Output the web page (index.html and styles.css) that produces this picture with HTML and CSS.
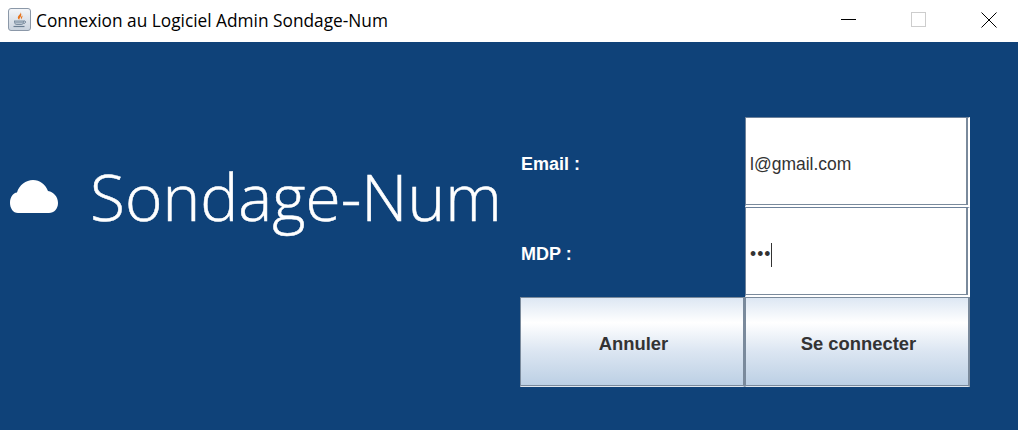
FILE: index.html
```html
<!DOCTYPE html>
<html lang="fr">
<head>
<meta charset="utf-8">
<title>Connexion au Logiciel Admin Sondage-Num</title>
<link rel="stylesheet" href="styles.css">
</head>
<body>
<div class="window">
  <header class="titlebar">
    <svg class="app-icon" width="23" height="23" viewBox="0 0 23 23">
      <defs><linearGradient id="ic" x1="0" y1="0" x2="0" y2="1"><stop offset="0" stop-color="#f4f6f9"/><stop offset="1" stop-color="#c9d2dd"/></linearGradient></defs>
      <rect x="0.5" y="0.5" width="22" height="22" rx="2.5" fill="url(#ic)" stroke="#8b98a8"/>
      <path d="M12.500 4c1 2.500-3.500 3.500-2.500 6.500.3.800 1 1 1.500 1-.5-2 3.500-3 1-7.500zM14.500 7.500c-1.500 1-2 2.200-1.300 4 .2-1 1.500-2 1.300-4z" fill="#e8741c"/>
      <path d="M6 12.500h10v1.200c0 2-1.500 3.300-3 3.300h-4c-1.500 0-3-1.300-3-3.300z" fill="#7d8fa1"/>
      <path d="M7 14h8M7.500 15.500h7" stroke="#dfe5ec" stroke-width="0.600" fill="none"/>
      <path d="M16 13c2.200-.5 2.200 2.500-.5 2.500" stroke="#6a7d90" fill="none"/>
      <path d="M5.500 18.500h11" stroke="#6a7d90" stroke-width="1.200" fill="none"/>
    </svg>
    <h1 class="title">Connexion au Logiciel Admin Sondage-Num</h1>
    <div class="controls">
      <svg class="ctl ctl-min" width="16" height="16" viewBox="0 0 16 16"><path d="M0 7.500h15" stroke="#000" fill="none"/></svg>
      <svg class="ctl ctl-max" width="16" height="16" viewBox="0 0 16 16"><rect x="1.500" y="0.500" width="14" height="14" stroke="#cdcdcd" fill="none"/></svg>
      <svg class="ctl ctl-close" width="16" height="16" viewBox="0 0 16 16"><path d="M0.500 0.500l15 15M15.500 0.500l-15 15" stroke="#000" fill="none"/></svg>
    </div>
  </header>
  <main class="content">
    <section class="brand">
      <svg class="cloud" width="48" height="33" viewBox="0 0 48 33"><path d="M8 33C3 33 0 28 0 23 0 17 3 13 7 12.500 9 5 16 0 23 0 30 0 35 4 38 11 44 12 48 17 48 23 48 29 44 33 39 33z" fill="#fff"/></svg>
      <div class="brand-name">Sondage-Num</div>
    </section>
    <form class="login">
      <div class="label">Email :</div>
      <div class="field">l@gmail.com</div>
      <div class="label">MDP :</div>
      <div class="field"><span class="dots">•••</span><span class="caret"></span></div>
      <button class="btn" type="button">Annuler</button>
      <button class="btn" type="button">Se connecter</button>
    </form>
  </main>
</div>
</body>
</html>
```

FILE: styles.css
```css
html, body {
  margin: 0;
  padding: 0;
  height: 100%;
  overflow: hidden;
}
.window {
  display: flex;
  flex-direction: column;
  height: 430px;
  background: #0f4279;
}
.titlebar {
  height: 42px;
  background: #fff;
  display: flex;
  align-items: center;
  padding: 0 21px 0 8px;
  flex: none;
}
.app-icon {
  flex: none;
  margin-right: 5px;
  margin-top: -3px;
}
.title {
  margin: -1px 0 0 0;
  font: 400 17.300px "Open Sans", "Noto Sans", sans-serif;
  color: #000;
  flex: 1;
  white-space: nowrap;
}
.controls {
  display: flex;
  align-items: center;
  margin-top: -3px;
}
.ctl-max { margin-left: 53px; }
.ctl-close { margin-left: 55px; }
.content {
  flex: 1;
  display: flex;
  align-items: flex-start;
}
.brand {
  width: 520px;
  flex: none;
  display: flex;
  align-items: center;
  padding: 118px 0 0 10px;
  box-sizing: border-box;
}
.cloud { flex: none; margin-top: -2px; }
.brand-name {
  margin-left: 32px;
  font: 300 64px "Open Sans", "Noto Sans", sans-serif;
  -webkit-text-stroke: 0.500px #fff;
  color: #fff;
  white-space: nowrap;
  line-height: 74px;
}
.login {
  margin-top: 75px;
  display: grid;
  grid-template-columns: 225px 225px;
  grid-template-rows: 90px 90px 90px;
  font-family: "Liberation Sans", Arial, sans-serif;
}
.label {
  color: #fff;
  font-weight: 700;
  font-size: 18px;
  display: flex;
  align-items: center;
  padding: 5px 0 0 1px;
  box-sizing: border-box;
}
.field {
  box-sizing: border-box;
  background: #fff;
  color: #333;
  font-size: 17.500px;
  display: flex;
  align-items: center;
  padding: 6px 0 0 4px;
  border-style: solid;
  border-width: 1px 2px 2px 1px;
  border-color: #6d819a #fff #fff #6d819a;
  box-shadow: inset -2px -1px 0 #7a8a9c;
}
.dots {
  letter-spacing: 1px;
  font-size: 17.500px;
}
.caret {
  width: 1px;
  height: 24px;
  background: #333;
}
.btn {
  box-sizing: border-box;
  margin: 0;
  font: 700 18.400px "Liberation Sans", Arial, sans-serif;
  color: #333;
  padding: 4px 0 0 3px;
  background: linear-gradient(#dde7f3 0%, #fff 28%, #dce6f2 60%, #bbcfe4 100%);
  border-style: solid;
  border-width: 1px 2px 1px 1px;
  border-color: #7a8a9c #7a8a9c #dfe6ee #7a8a9c;
  border-radius: 0;
  box-shadow: inset 0 -1px 0 #7a8a9c;
}
```
